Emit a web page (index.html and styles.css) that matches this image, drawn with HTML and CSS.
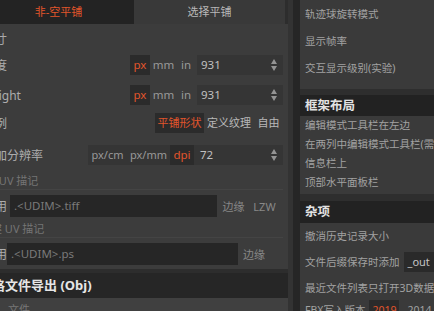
FILE: index.html
```html
<!DOCTYPE html>
<html lang="zh-CN">
<head>
    <meta charset="UTF-8">
    <title>首选项</title>
    <link rel="stylesheet" href="styles.css">
</head>
<body>
    <div class="left">
        <div class="left-content">
            <div class="inner">
                <div class="tabs">
                    <div class="tab active">非-空平铺</div>
                    <div class="tab">选择平铺</div>
                </div>

                <div class="panel">
                    <div class="heading">尺寸</div>

                    <div class="row row-w">
                        <span class="label">宽度</span>
                        <div class="units">
                            <span class="unit on">px</span>
                            <span class="unit mm">mm</span>
                            <span class="unit in">in</span>
                        </div>
                        <div class="num">931<span class="spin"></span></div>
                    </div>

                    <div class="row row-h">
                        <span class="label">Height</span>
                        <div class="units">
                            <span class="unit on">px</span>
                            <span class="unit mm">mm</span>
                            <span class="unit in">in</span>
                        </div>
                        <div class="num">931<span class="spin"></span></div>
                    </div>

                    <div class="row row-ratio">
                        <span class="label">比例</span>
                        <div class="chips">
                            <span class="chip on">平铺形状</span>
                            <span class="chip c-tex">定义纹理</span>
                            <span class="chip c-free">自由</span>
                        </div>
                    </div>

                    <div class="row row-res">
                        <span class="label">附加分辨率</span>
                        <div class="res">
                            <span class="r-unit r-cm">px/cm</span>
                            <span class="r-unit r-mm">px/mm</span>
                            <span class="r-unit on">dpi</span>
                            <span class="r-val">72</span>
                            <span class="spin"></span>
                        </div>
                    </div>

                    <div class="sub sub-1">导出 UV 描记</div>
                    <div class="row row-file">
                        <span class="label">使用</span>
                        <div class="path path-1">.&lt;UDIM&gt;.tiff</div>
                        <span class="opt o-edge">边缘</span>
                        <span class="opt o-lzw">LZW</span>
                    </div>

                    <div class="sub sub-2">创建 UV 描记</div>
                    <div class="row row-file2">
                        <span class="label">使用</span>
                        <div class="path path-2">.&lt;UDIM&gt;.ps</div>
                        <span class="opt o-edge">边缘</span>
                    </div>
                </div>

                <div class="big-head">网格文件导出 (Obj)</div>
                <div class="foot-row">文件</div>
            </div>
        </div>
        <div class="scroll"></div>
    </div>

    <div class="right">
        <div class="block block-top">
            <div class="item">轨迹球旋转模式</div>
            <div class="item">显示帧率</div>
            <div class="item">交互显示级别(实验)</div>
        </div>

        <div class="head">框架布局</div>
        <div class="block block-list">
            <div class="li">编辑模式工具栏在左边</div>
            <div class="li">在两列中编辑模式工具栏(需要重启)</div>
            <div class="li">信息栏上</div>
            <div class="li">顶部水平面板栏</div>
        </div>

        <div class="head">杂项</div>
        <div class="block block-misc">
            <div class="item">撤消历史记录大小</div>
            <div class="item item-in">文件后缀保存时添加<span class="suffix">_out</span></div>
            <div class="item">最近文件列表只打开3D数据而不打开图像</div>
            <div class="item item-fbx">FBX写入版本<span class="fbx on">2019</span><span class="fbx">2014</span></div>
        </div>
    </div>
</body>
</html>
```

FILE: styles.css
```css
body {
    margin: 0;
    width: 434px;
    height: 311px;
    overflow: hidden;
    background: #262626;
    display: flex;
    font-family: 'Noto Sans', 'Noto Sans CJK SC', sans-serif;
    font-size: 11px;
    color: #aaa;
}

/* left column */
.left {
    width: 293px;
    display: flex;
    flex-shrink: 0;
}
.left-content {
    width: 288px;
    overflow: hidden;
    background: #3c3c3c;
    display: flex;
    flex-direction: column;
}
.scroll {
    width: 5px;
    background: #333;
}
.inner {
    width: 305px;
    margin-left: -17px;
    background: #2d2d2d;
}
.tabs {
    display: flex;
    height: 24px;
}
.tab {
    width: 151px;
    line-height: 24px;
    text-align: center;
    background: #393939;
    color: #b8b8b8;
}
.tab.active {
    background: #232323;
    color: #e2562b;
}
.panel {
    background: #3c3c3c;
    padding: 0 5px 4px 0;
    display: flex;
    flex-direction: column;
}
.heading {
    height: 31px;
    line-height: 20px;
    padding-top: 6px;
    box-sizing: border-box;
    font-size: 12px;
}
.row {
    display: flex;
    align-items: center;
    height: 20px;
}
.label {
    font-size: 12px;
    color: #adadad;
    margin-right: auto;
    white-space: nowrap;
}
.row-h { margin-top: 10px; }
.row-ratio { margin-top: 8px; }
.row-res { margin-top: 12px; }

.units {
    display: flex;
    height: 20px;
    font-size: 11.5px;
}
.unit {
    line-height: 20px;
    text-align: center;
    color: #999;
}
.unit.on {
    width: 20px;
    background: #2b2b2b;
    color: #e2552b;
}
.unit.mm { width: 27px; }
.unit.in { width: 18px; margin-right: 2px; }

.num {
    width: 86px;
    height: 20px;
    line-height: 20px;
    background: #353535;
    color: #c0c0c0;
    font-size: 11.5px;
    padding-left: 4px;
    box-sizing: border-box;
    position: relative;
}
.spin {
    position: absolute;
    right: 5px;
    top: 4px;
    width: 7px;
    height: 12px;
}
.spin::before, .spin::after {
    content: '';
    position: absolute;
    left: 0;
    border-left: 3.5px solid transparent;
    border-right: 3.5px solid transparent;
}
.spin::before {
    top: 0;
    border-bottom: 5px solid #949494;
}
.spin::after {
    bottom: 0;
    border-top: 5px solid #949494;
}

.chips {
    display: flex;
    height: 20px;
}
.chip {
    line-height: 20px;
    text-align: center;
    color: #b8b8b8;
}
.chip.on {
    width: 49px;
    background: #2b2b2b;
    color: #e2552b;
}
.c-tex { width: 50px; }
.c-free { width: 29px; }

.res {
    width: 195px;
    height: 20px;
    display: flex;
    background: #353535;
    position: relative;
    font-size: 11px;
}
.r-unit {
    line-height: 20px;
    text-align: center;
    color: #999;
}
.r-cm { width: 39px; }
.r-mm { width: 43px; }
.r-unit.on {
    width: 24px;
    background: #2b2b2b;
    color: #e2552b;
    font-size: 11.5px;
}
.r-val {
    line-height: 20px;
    padding-left: 6px;
    color: #c0c0c0;
    font-size: 11.5px;
}

.sub {
    height: 16px;
    line-height: 16px;
    margin-top: 8px;
    border-bottom: 1px solid #444;
    color: #747474;
    font-size: 11px;
    white-space: nowrap;
}
.sub-1 { margin-left: -9px; }
.sub-2 { margin-left: -3px; margin-top: 4px; }

.row-file, .row-file2 {
    height: 22px;
    margin-top: 5px;
}
.path {
    height: 22px;
    line-height: 22px;
    background: #262626;
    color: #7a7a7a;
    font-size: 11.5px;
    padding-left: 4px;
    box-sizing: border-box;
}
.path-1 { width: 207px; }
.path-2 { width: 240px; }
.opt {
    color: #888;
    text-align: center;
}
.o-edge { width: 33px; }
.o-lzw { width: 29px; margin-right: 4px; }
.row-file2 .o-edge { margin-right: 13px; }

.big-head {
    margin-top: 4px;
    margin-left: -4px;
    height: 25px;
    line-height: 25px;
    background: #262626;
    color: #e6e6e6;
    font-weight: bold;
    font-size: 13px;
    white-space: nowrap;
}
.foot-row {
    height: 20px;
    line-height: 24px;
    background: #404040;
    color: #777;
    padding-left: 25px;
}

/* right column */
.right {
    width: 134px;
    margin-left: 7px;
    flex-shrink: 0;
    overflow: hidden;
    white-space: nowrap;
    background: #2e2e2e;
    font-size: 10.5px;
    color: #a2a2a2;
}
.block {
    background: #3a3a3a;
    padding-left: 5px;
}
.block-top {
    height: 89px;
    padding-top: 1px;
    box-sizing: border-box;
}
.item {
    height: 27px;
    line-height: 27px;
}
.head {
    margin-top: 6px;
    height: 21px;
    line-height: 21px;
    background: #222;
    color: #e2e2e2;
    font-weight: bold;
    font-size: 12.5px;
    padding-left: 5px;
}
.block-list {
    height: 78px;
}
.li {
    height: 19px;
    line-height: 19px;
}
.block-list + .head {
    margin-top: 7px;
    height: 22px;
    line-height: 22px;
}
.block-misc {
    height: 100px;
}
.block-misc .item {
    height: 26px;
    line-height: 26px;
}
.item-in {
    display: flex;
    align-items: center;
}
.suffix {
    margin-left: 4px;
    height: 20px;
    line-height: 20px;
    padding: 0 4px;
    background: #2a2a2a;
    color: #c4c4c4;
    font-size: 11px;
    width: 40px;
}
.item-fbx {
    display: flex;
    align-items: center;
    margin-top: -4px;
}
.fbx {
    margin-left: 8px;
    color: #a2a2a2;
}
.fbx.on {
    margin-left: 4px;
    background: #2b2b2b;
    color: #e2552b;
    padding: 0 3px;
    line-height: 20px;
}
```
